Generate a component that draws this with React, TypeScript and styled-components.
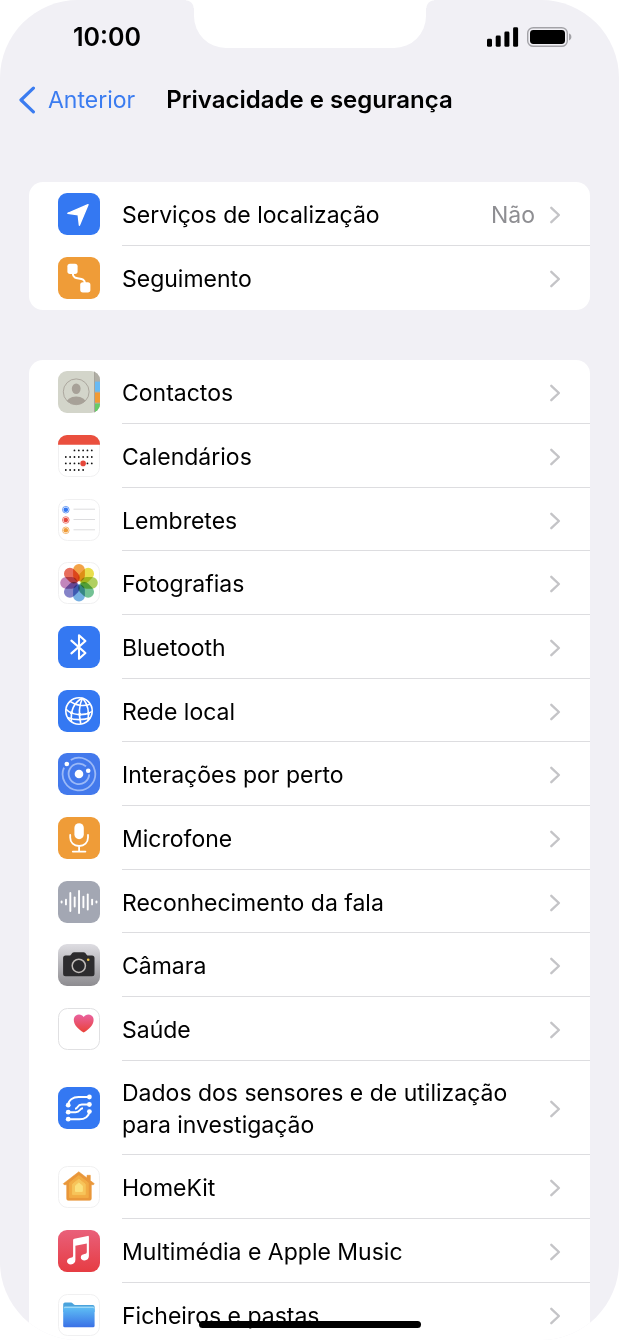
import React from "react";
import styled, { createGlobalStyle } from "styled-components";

const GlobalStyle = createGlobalStyle`
  *, *::before, *::after { box-sizing: border-box; }
  html, body { margin: 0; background: #ffffff; }
  body {
    font-family: Inter, "Liberation Sans", sans-serif;
    font-size: 23px;
    line-height: 32px;
    color: #000000;
  }
`;

const Screen = styled.div`
  position: relative;
  height: 100vh;
  overflow: hidden;
  border-radius: 78px;
  background: #f1f0f5;
`;

const Notch = styled.div`
  position: absolute;
  top: 0;
  left: 50%;
  width: 232px;
  height: 48px;
  margin-left: -116px;
  border-radius: 0 0 32px 32px;
  background: #ffffff;

  &::before,
  &::after {
    content: "";
    position: absolute;
    top: 0;
    width: 8px;
    height: 8px;
  }
  &::before {
    right: 100%;
    background: radial-gradient(circle at 0 100%, transparent 7px, #ffffff 8px);
  }
  &::after {
    left: 100%;
    background: radial-gradient(circle at 100% 100%, transparent 7px, #ffffff 8px);
  }
`;

const StatusBar = styled.div`
  display: flex;
  align-items: center;
  justify-content: space-between;
  height: 74px;
  padding: 0 47px 0 73px;
`;

const Clock = styled.time`
  font-size: 25px;
  font-weight: 600;
`;

const StatusIcons = styled.div`
  display: flex;
  align-items: center;
  gap: 8px;

  svg { display: block; }
`;

const NavBar = styled.header`
  display: grid;
  grid-template-columns: 1fr auto 1fr;
  align-items: center;
  height: 52px;
  padding: 0 18px;
`;

const BackLink = styled.a`
  display: flex;
  align-items: center;
  gap: 12px;
  color: #3b7cf0;
  text-decoration: none;
`;

const Title = styled.h1`
  margin: 0;
  font-size: 24px;
  font-weight: 600;
`;

const Content = styled.main`
  display: flex;
  flex-direction: column;
  gap: 50px;
  padding: 56px 29px 0;
`;

const Card = styled.ul`
  margin: 0;
  padding: 0;
  list-style: none;
  overflow: hidden;
  border-radius: 14px;
  background: #ffffff;
`;

const RowBody = styled.span`
  display: flex;
  flex: 1;
  align-items: center;
  align-self: stretch;
  gap: 14px;
  padding: 16px 29px 13px 0;
  border-bottom: 1px solid #dddde0;
`;

const Row = styled.a`
  display: flex;
  align-items: center;
  gap: 22px;
  min-height: 64px;
  padding-left: 29px;
  color: inherit;
  text-decoration: none;
`;

const Item = styled.li`
  &:nth-child(3n) ${Row} { min-height: 63px; }
  &:last-child ${RowBody} { border-bottom-color: transparent; }
`;

const Label = styled.span`
  flex: 1;
`;

const Value = styled.span`
  color: #8e8e92;
`;

const IconTile = styled.svg`
  display: block;
  flex: none;
  width: 42px;
  height: 42px;
`;

const HomeIndicator = styled.div`
  position: absolute;
  bottom: 12px;
  left: 50%;
  width: 222px;
  height: 7px;
  border-radius: 4px;
  background: #000000;
  transform: translateX(-50%);
`;

const Tile = ({ fill, outline }: { fill: string; outline?: string }) =>
  outline ? (
    <rect x="0.5" y="0.5" width="41" height="41" rx="9" fill={fill} stroke={outline} />
  ) : (
    <rect width="42" height="42" rx="9" fill={fill} />
  );

const BLUE = "#3478f2";
const ORANGE = "#ef9c38";
const FAINT = "#f0f0f1";

const locationIcon = (
  <>
    <Tile fill={BLUE} />
    <path d="M30 11.7 9.8 20.3 20.2 21.8 21.4 32.2Z" fill="#fff" stroke="#fff" strokeWidth="1.4" strokeLinejoin="round" />
  </>
);

const trackingIcon = (
  <>
    <Tile fill={ORANGE} />
    <path d="M14.8 15v1.6c0 7.8 12.2 1.8 12.2 10" fill="none" stroke="#fff" strokeWidth="2" />
    <rect x="9.4" y="6.7" width="10.2" height="10.2" rx="2.6" fill="#fff" />
    <rect x="22.2" y="25.2" width="10.2" height="10.2" rx="2.6" fill="#fff" />
  </>
);

const contactsIcon = (
  <>
    <defs>
      <clipPath id="contacts-tile"><rect width="42" height="42" rx="9" /></clipPath>
      <clipPath id="contacts-face"><circle cx="18.2" cy="20.8" r="12.9" /></clipPath>
    </defs>
    <g clipPath="url(#contacts-tile)">
      <rect width="42" height="42" fill="#d3d5ca" />
      <rect x="36" width="6" height="42" fill="#b0aea5" />
      <rect x="37" y="10.6" width="5" height="10" fill="#68baf4" />
      <rect x="37" y="21.6" width="5" height="10" fill="#f29a34" />
      <rect x="37" y="32.6" width="5" height="10" fill="#66cc66" />
      <path d="M36.5 0v42" stroke="#a3a198" strokeWidth="0.8" />
    </g>
    <g clipPath="url(#contacts-face)" fill="#a7a198">
      <ellipse cx="18.2" cy="17.8" rx="4.4" ry="5.2" />
      <ellipse cx="18.2" cy="33" rx="10.4" ry="7.4" />
    </g>
    <circle cx="18.2" cy="20.8" r="12.9" fill="none" stroke="#a7a198" strokeWidth="0.9" />
  </>
);

const calendarRows = [
  { y: 15.4, from: 2, to: 6 },
  { y: 22, from: 0, to: 6 },
  { y: 28.4, from: 0, to: 6 },
  { y: 35, from: 0, to: 4 },
];

const calendarIcon = (
  <>
    <Tile fill="#fff" outline={FAINT} />
    <path d="M0 9.8V9a9 9 0 0 1 9-9h24a9 9 0 0 1 9 9v.8Z" fill="#ea4f3e" />
    {calendarRows.map(({ y, from, to }) =>
      Array.from({ length: to - from + 1 }, (_, i) => (
        <circle key={`${y}-${i}`} cx={7.8 + (from + i) * 4.33} cy={y} r="0.9" fill="#111" />
      )),
    )}
    <circle cx="25.1" cy="28.4" r="2.8" fill="#e5483c" />
  </>
);

const remindersIcon = (
  <>
    <Tile fill="#fff" outline={FAINT} />
    {["#3478f2", "#e5483c", "#ef9c38"].map((color, i) => (
      <g key={color}>
        <circle cx="7.8" cy={10.7 + i * 10.3} r="3.3" fill="#fff" stroke={color} strokeWidth="0.7" />
        <circle cx="7.8" cy={10.7 + i * 10.3} r="2.3" fill={color} />
        <path d={`M15.5 ${10.2 + i * 10.3}H37`} stroke="#d8d8da" strokeWidth="0.9" />
      </g>
    ))}
  </>
);

const petals = ["#f29b38", "#e8dc3c", "#a9cc52", "#68bd8c", "#6aa8e0", "#7b78c4", "#bd7cb6", "#e5604e"];

const photosIcon = (
  <>
    <Tile fill="#fff" outline={FAINT} />
    <g style={{ isolation: "isolate" }}>
      {petals.map((color, i) => (
        <rect
          key={color}
          x="15.1"
          y="2"
          width="11.8"
          height="17.4"
          rx="5.9"
          fill={color}
          opacity="0.92"
          transform={`rotate(${i * 45} 21 20.8)`}
          style={{ mixBlendMode: "multiply" }}
        />
      ))}
    </g>
    <circle cx="21" cy="20.8" r="1.2" fill="#fff" />
  </>
);

const bluetoothIcon = (
  <>
    <Tile fill={BLUE} />
    <path d="M13.4 14.6 27.4 27 21 32.8V9.2L27.4 15 13.4 27.4" fill="none" stroke="#fff" strokeWidth="2.1" strokeLinejoin="round" strokeLinecap="round" />
  </>
);

const networkIcon = (
  <>
    <Tile fill={BLUE} />
    <g fill="none" stroke="#fff" strokeWidth="1.6">
      <circle cx="21" cy="21" r="13.2" />
      <path d="M24.600 8C16.500 12 12.400 20 13.400 32M24.600 8c-3.600 7-4 16-1.800 26M24.600 8c5 6 7 13.500 5.400 23" />
      <path d="M12 11.400c6 4.400 14 5.200 20 2.800M7.800 19c6 6.400 18 7.400 26.200 2.600M9.400 27.400c7 2.600 16 2.800 23 .4" />
    </g>
    <g fill="#fff">
      <circle cx="21.800" cy="24.200" r="1.500" />
      <circle cx="30.400" cy="23.400" r="1.500" />
      <circle cx="13.400" cy="22.800" r="1.500" />
    </g>
  </>
);

const nearbyIcon = (
  <>
    <Tile fill="#4379ec" />
    <g fill="none" stroke="#9bb9f7" strokeWidth="1.8">
      <path d="M12.8 7A16.3 16.3 0 1 1 6 14.6" />
      <path d="M31.2 21.4A10.3 10.3 0 1 1 28 13.4" />
    </g>
    <g fill="#fff">
      <circle cx="21" cy="21" r="4.3" />
      <circle cx="8.8" cy="11" r="2.3" />
      <circle cx="30.2" cy="17.8" r="2.3" />
    </g>
  </>
);

const microphoneIcon = (
  <>
    <Tile fill={ORANGE} />
    <rect x="16.4" y="6.2" width="9.4" height="16" rx="4.7" fill="#fff" />
    <path d="M12.2 18v2.6c0 5 3.6 8.4 8.9 8.4S30 25.6 30 20.6V18M21.1 29v5.4M14.8 34.6h12.6" fill="none" stroke="#fff" strokeWidth="1.8" strokeLinecap="round" />
  </>
);

const speechBars = [0.6, 2.4, 9, 4.6, 11, 5.2, 7.6, 2.4, 0.6];

const speechIcon = (
  <>
    <Tile fill="#a3a7b3" />
    {speechBars.map((half, i) => (
      <path key={i} d={`M${3.6 + i * 4.36} ${21 - half}v${half * 2}`} stroke="#fff" strokeWidth="1.9" strokeLinecap="round" />
    ))}
  </>
);

const cameraIcon = (
  <>
    <defs>
      <linearGradient id="camera-bg" x2="0" y2="1">
        <stop stopColor="#dedde2" />
        <stop offset="1" stopColor="#8d8c90" />
      </linearGradient>
    </defs>
    <Tile fill="url(#camera-bg)" />
    <path d="M7.6 11.6h4c1.800 0 2-3.400 4.400-3.400h9.600c2.400 0 2.600 3.400 4.400 3.400h4a2.500 2.500 0 0 1 2.500 2.500v15.600a2.500 2.500 0 0 1-2.500 2.500H7.600a2.500 2.500 0 0 1-2.500-2.500V14.100a2.500 2.500 0 0 1 2.500-2.500Z" fill="#2d2c2e" />
    <circle cx="20.8" cy="21.8" r="6.6" fill="#29282a" stroke="#c0bbb8" strokeWidth="1.5" />
    <circle cx="30.2" cy="15.8" r="1.3" fill="#f3c64a" />
  </>
);

const healthIcon = (
  <>
    <defs>
      <linearGradient id="health-heart" x2="0" y2="1">
        <stop stopColor="#e9629f" />
        <stop offset="1" stopColor="#ea4238" />
      </linearGradient>
    </defs>
    <Tile fill="#fff" outline="#e0e0e2" />
    <path d="M25.7 24.6C20 20.8 15.8 16.8 15.8 11.9c0-3.200 2.300-5.500 5.200-5.500 2 0 3.700 1 4.700 2.600 1-1.600 2.700-2.600 4.700-2.600 2.900 0 5.200 2.300 5.200 5.500 0 4.900-4.200 8.900-9.900 12.700Z" fill="url(#health-heart)" />
  </>
);

const researchIcon = (
  <>
    <Tile fill={BLUE} />
    <g fill="none" stroke="#fff" strokeWidth="1.9">
      <path d="M10.2 18c0-4.600 4.600-8 10.400-8h10.600" />
      <path d="M31.2 17.500h-7.400c-5 0-3.400 4.200-6.800 4.200" />
      <path d="M10.2 25.200h7.400c5.200 0 3.600-3.900 7.400-3.900" />
      <path d="M31.2 24.800c0 4.400-4.400 7.400-9.800 7.400H10.200" />
    </g>
    <g fill="#fff">
      {[[31.4, 10], [31.4, 17.5], [31.4, 24.6], [10.2, 18.2], [10.2, 25.2], [10.2, 32.2]].map(([x, y]) => (
        <circle key={`${x}-${y}`} cx={x} cy={y} r="2.4" />
      ))}
    </g>
  </>
);

const homeIcon = (
  <>
    <Tile fill="#fff" outline={FAINT} />
    <path d="M20.8 5.8 29 12V9.3h3.300v5.300l4 3.100-.9 1h-2.100v14a1.600 1.600 0 0 1-1.600 1.600H10.300a1.600 1.600 0 0 1-1.600-1.600v-14H6.200l-.9-1Z" fill="#e9973a" stroke="#e9973a" strokeWidth="0.6" strokeLinejoin="round" />
    <path d="M20.8 9.600 11.600 16.800v14.800h18.600V16.800Z" fill="#f2ac44" stroke="#f2ac44" strokeLinejoin="round" />
    <path d="M20.8 13.200l-6.200 5v10.400h12.600V18.200Z" fill="#f7c45a" stroke="#f7c45a" strokeLinejoin="round" />
    <path d="M20.8 17l-3.300 2.800v5.600h6.800v-5.600Z" fill="#fbe07c" stroke="#fbe07c" strokeLinejoin="round" />
  </>
);

const musicIcon = (
  <>
    <defs>
      <linearGradient id="music-bg" x2="0" y2="1">
        <stop stopColor="#e9607a" />
        <stop offset="1" stopColor="#e63c43" />
      </linearGradient>
    </defs>
    <Tile fill="url(#music-bg)" />
    <path d="M16.3 8.700 29.700 5.900q1.200-.2 1.200 1V26c0 2.800-1.800 4.400-4.400 4.400-2.300 0-3.700-1.200-3.700-2.900 0-2.100 1.600-3.100 3.700-3.500 1.400-.3 2.300-.6 2.300-2V13.400L17.400 15.800V29.800c0 2.800-1.800 4.600-4.500 4.600-2.300 0-3.900-1.200-3.900-3.100s1.600-3.100 3.700-3.500c1.500-.3 2.400-.6 2.400-2V10.100q0-1.200 1.200-1.400Z" fill="#fff" />
  </>
);

const filesIcon = (
  <>
    <defs>
      <linearGradient id="files-folder" x2="0" y2="1">
        <stop stopColor="#5dbcf4" />
        <stop offset="1" stopColor="#3a70e6" />
      </linearGradient>
    </defs>
    <Tile fill="#fff" outline={FAINT} />
    <path d="M5.2 10.400a1.800 1.800 0 0 1 1.800-1.800h6.200c1.800 0 2 2.400 3.800 2.400h17.800a1.800 1.800 0 0 1 1.800 1.800V18H5.200Z" fill="#4aa3dc" />
    <rect x="6" y="12.4" width="30" height="4" rx="1" fill="#9bd8f8" />
    <rect x="5.2" y="13.9" width="31.4" height="19.4" rx="1.6" fill="url(#files-folder)" />
  </>
);

const Chevron = () => (
  <svg width="12" height="18" viewBox="0 0 12 18" aria-hidden="true">
    <path d="m2.3 1.8 7.600 7.200-7.600 7.200" fill="none" stroke="#c4c4c7" strokeWidth="2.4" strokeLinecap="round" strokeLinejoin="round" />
  </svg>
);

type Entry = { label: string; icon: React.ReactNode; value?: string };

const groups: Entry[][] = [
  [
    { label: "Serviços de localização", icon: locationIcon, value: "Não" },
    { label: "Seguimento", icon: trackingIcon },
  ],
  [
    { label: "Contactos", icon: contactsIcon },
    { label: "Calendários", icon: calendarIcon },
    { label: "Lembretes", icon: remindersIcon },
    { label: "Fotografias", icon: photosIcon },
    { label: "Bluetooth", icon: bluetoothIcon },
    { label: "Rede local", icon: networkIcon },
    { label: "Interações por perto", icon: nearbyIcon },
    { label: "Microfone", icon: microphoneIcon },
    { label: "Reconhecimento da fala", icon: speechIcon },
    { label: "Câmara", icon: cameraIcon },
    { label: "Saúde", icon: healthIcon },
    { label: "Dados dos sensores e de utilização para investigação", icon: researchIcon },
    { label: "HomeKit", icon: homeIcon },
    { label: "Multimédia e Apple Music", icon: musicIcon },
    { label: "Ficheiros e pastas", icon: filesIcon },
  ],
];

export default function App() {
  return (
    <>
      <GlobalStyle />
      <Screen>
        <Notch />
        <StatusBar>
          <Clock>10:00</Clock>
          <StatusIcons>
            <svg width="33" height="20" viewBox="0 0 33 20" aria-hidden="true">
              <rect x="1" y="11.8" width="5" height="8" rx="1.4" />
              <rect x="9.7" y="8.5" width="5" height="11.3" rx="1.4" />
              <rect x="18.4" y="4.5" width="5" height="15.3" rx="1.4" />
              <rect x="27.1" y="0.3" width="5" height="19.5" rx="1.4" />
            </svg>
            <svg width="45" height="20" viewBox="0 0 45 20" aria-hidden="true">
              <rect x="0.7" y="0.7" width="39.6" height="18.6" rx="5.6" fill="none" stroke="#a3a2a7" strokeWidth="1.4" />
              <rect x="3" y="3" width="35" height="14" rx="3.4" />
              <path d="M42 6.600c3.200 1 3.200 5.800 0 6.800Z" fill="#a3a2a7" />
            </svg>
          </StatusIcons>
        </StatusBar>
        <NavBar>
          <BackLink href="#anterior">
            <svg width="18" height="28" viewBox="0 0 18 28" aria-hidden="true">
              <path d="M15.4 2.200 3 14l12.400 11.800" fill="none" stroke="currentColor" strokeWidth="3.2" strokeLinecap="round" strokeLinejoin="round" />
            </svg>
            Anterior
          </BackLink>
          <Title>Privacidade e segurança</Title>
        </NavBar>
        <Content>
          {groups.map((entries) => (
            <Card key={entries[0].label}>
              {entries.map(({ label, icon, value }) => (
                <Item key={label}>
                  <Row href="#">
                    <IconTile viewBox="0 0 42 42" aria-hidden="true">{icon}</IconTile>
                    <RowBody>
                      <Label>{label}</Label>
                      {value && <Value>{value}</Value>}
                      <Chevron />
                    </RowBody>
                  </Row>
                </Item>
              ))}
            </Card>
          ))}
        </Content>
        <HomeIndicator />
      </Screen>
    </>
  );
}
